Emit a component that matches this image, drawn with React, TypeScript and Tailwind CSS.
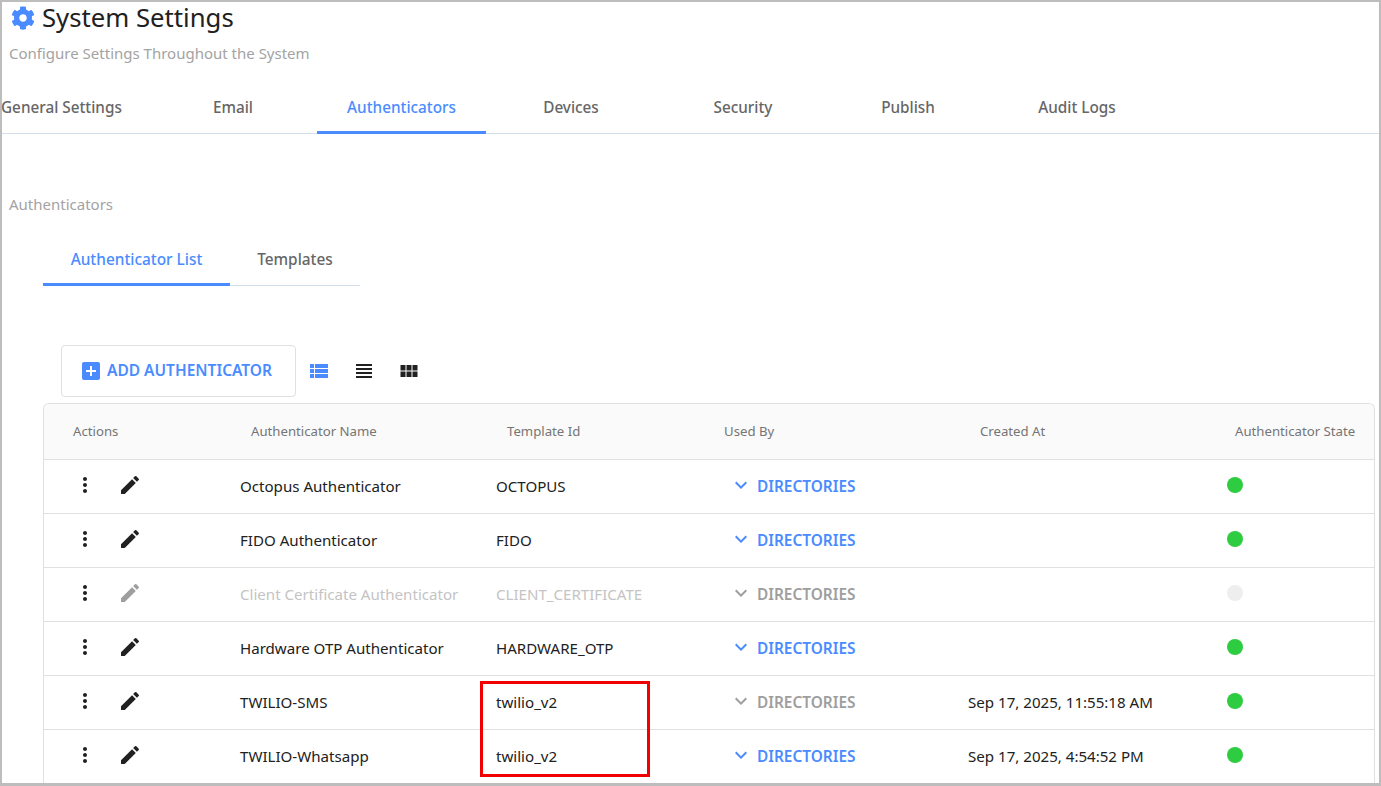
import { FaCog } from 'react-icons/fa';
import {
  MdAddBox,
  MdEdit,
  MdKeyboardArrowDown,
  MdMoreVert,
  MdViewHeadline,
  MdViewList,
} from 'react-icons/md';

const tabs = [
  { label: 'General Settings', width: 'w-[147px] -indent-[1px]', align: 'justify-start' },
  { label: 'Email', width: 'w-[168px]', align: 'justify-center' },
  { label: 'Authenticators', width: 'w-[169px]', align: 'justify-center', active: true },
  { label: 'Devices', width: 'w-[170px]', align: 'justify-center' },
  { label: 'Security', width: 'w-[174px]', align: 'justify-center' },
  { label: 'Publish', width: 'w-[156px]', align: 'justify-center' },
  { label: 'Audit Logs', width: 'w-[182px]', align: 'justify-center' },
];

const rows = [
  { name: 'Octopus Authenticator', template: 'OCTOPUS', used: true, created: '', on: true },
  { name: 'FIDO Authenticator', template: 'FIDO', used: true, created: '', on: true },
  { name: 'Client Certificate Authenticator', template: 'CLIENT_CERTIFICATE', used: false, created: '', on: false },
  { name: 'Hardware OTP Authenticator', template: 'HARDWARE_OTP', used: true, created: '', on: true },
  { name: 'TWILIO-SMS', template: 'twilio_v2', used: false, created: 'Sep 17, 2025, 11:55:18 AM', on: true },
  { name: 'TWILIO-Whatsapp', template: 'twilio_v2', used: true, created: 'Sep 17, 2025, 4:54:52 PM', on: true },
];

const gridCols = 'grid grid-cols-[185px_256px_217px_256px_255px_1fr]';

// 3x2 block grid, the package's view_module is outlined
function GridIcon() {
  return (
    <svg viewBox="0 0 24 24" className="w-[24px] h-[24px] text-[#212121]" fill="currentColor">
      <path d="M3.5 6h5v5.5h-5zM9.5 6h5v5.5h-5zM15.5 6h5v5.5h-5zM3.5 12.5h5V18h-5zM9.5 12.5h5V18h-5zM15.5 12.5h5V18h-5z" />
    </svg>
  );
}

export default function App() {
  return (
    <div className="relative w-[1381px] h-[786px] overflow-hidden bg-white border-t-2 border-l-2 border-r-2 border-b-[3px] border-[#bdbdbd] font-['Noto_Sans',sans-serif] text-[#212121]">
      {/* Header */}
      <div className="flex items-center h-[32px] pl-[9px] gap-[7px]">
        <FaCog className="w-[24px] h-[24px] text-[#4a8cff]" />
        <h1 className="text-[25.7px] leading-[30px] text-[#212121]">System Settings</h1>
      </div>
      <p className="mt-[9px] pl-[7px] text-[15px] leading-[20px] text-[#a3a3a3]">Configure Settings Throughout the System</p>

      {/* Main tabs */}
      <div className="flex mt-[21px] h-[50px] border-b border-[#d5dfeb]">
        {tabs.map((t) => (
          <div
            key={t.label}
            className={`flex items-center h-[50px] text-[15.3px] font-medium border-b-[3px] ${t.width} ${t.align} ${t.active ? 'text-[#4a8cff] border-[#4a8cff]' : 'text-[#666666] border-transparent'}`}
          >
            {t.label}
          </div>
        ))}
      </div>

      <p className="mt-[60px] pl-[7px] text-[15px] leading-[20px] text-[#a3a3a3]">Authenticators</p>

      {/* Sub tabs */}
      <div className="flex ml-[41px] mt-[26px] w-[317px] h-[46px] border-b border-[#d5dfeb]">
        <div className="flex items-center justify-center w-[187px] h-[46px] pb-[4px] text-[15.4px] font-medium text-[#4a8cff] border-b-[3px] border-[#4a8cff]">
          Authenticator List
        </div>
        <div className="flex items-center justify-center w-[130px] h-[46px] pb-[4px] text-[15.4px] font-medium text-[#666666] border-b-[3px] border-transparent">
          Templates
        </div>
      </div>

      {/* Toolbar */}
      <div className="flex items-center ml-[59px] mt-[59px]">
        <button className="flex items-center justify-center gap-[4px] w-[235px] h-[52px] pr-[6px] bg-white border border-[#e0e0e0] rounded-[4px] text-[#4a8cff] text-[15.5px] font-semibold">
          <MdAddBox className="w-[24px] h-[24px]" />
          ADD AUTHENTICATOR
        </button>
        <div className="flex items-center gap-[21px] ml-[11px]">
          <MdViewList className="w-[24px] h-[24px] text-[#4a8cff]" />
          <MdViewHeadline className="w-[24px] h-[24px] text-[#212121]" />
          <GridIcon />
        </div>
      </div>

      {/* Table */}
      <div className="ml-[41px] mt-[6px] w-[1332px] border-t border-l border-r border-[#e0e0e0] rounded-t-[6px]">
        <div className={`${gridCols} h-[55px] items-center bg-[#fafafa] rounded-t-[6px] text-[13.2px] text-[#757575]`}>
          <div className="pl-[29px]">Actions</div>
          <div className="pl-[22px]">Authenticator Name</div>
          <div className="pl-[22px]">Template Id</div>
          <div className="pl-[22px]">Used By</div>
          <div className="pl-[22px]">Created At</div>
          <div className="pl-[22px]">Authenticator State</div>
        </div>
        {rows.map((r) => (
          <div
            key={r.name}
            className={`${gridCols} h-[54px] items-center border-t border-[#e0e0e0] text-[15.1px] ${r.on ? 'text-[#212121]' : 'text-[#c4c4c4]'}`}
          >
            <div className="flex items-center pl-[29px] pb-[4px] gap-[21px]">
              <MdMoreVert className="w-[24px] h-[24px] text-[#212121]" />
              <MdEdit className={`w-[24px] h-[24px] ${r.on ? 'text-[#212121]' : 'text-[#9e9e9e]'}`} />
            </div>
            <div className="pl-[11px]">{r.name}</div>
            <div className="pl-[11px]">{r.template}</div>
            <div className={`flex items-center pl-[27px] gap-[4px] text-[15.4px] font-semibold ${r.used ? 'text-[#4a8cff]' : 'text-[#9e9e9e]'}`}>
              <MdKeyboardArrowDown className="w-[24px] h-[24px] -mt-[3px]" />
              DIRECTORIES
            </div>
            <div className="pl-[10px]">{r.created}</div>
            <div className="pl-[14px]">
              <div className={`w-[16px] h-[16px] rounded-full -mt-[3px] ${r.on ? 'bg-[#2ecc40]' : 'bg-[#eeeeee]'}`} />
            </div>
          </div>
        ))}
      </div>

      {/* Red highlight drawn over the template column */}
      <div className="absolute left-[478px] top-[679px] w-[170px] h-[96px] border-[3px] border-[#f00000]" />
    </div>
  );
}
